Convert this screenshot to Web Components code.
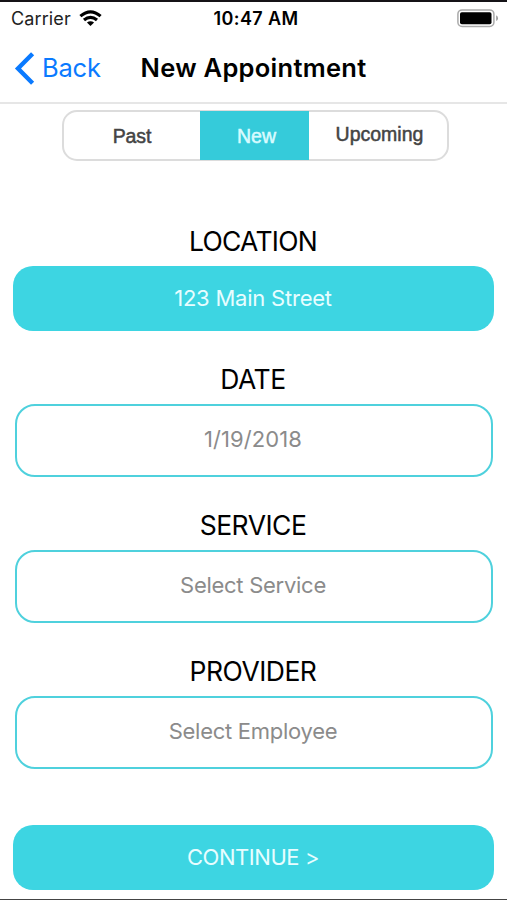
<!DOCTYPE html>
<html lang="en">
<head>
<meta charset="utf-8">
<title>New Appointment</title>
<style>
  body {
    margin: 0;
    background: #fff;
    font-family: Inter, "Liberation Sans", sans-serif;
  }
</style>
</head>
<body>
<phone-screen>
  <status-bar carrier="Carrier" time="10:47 AM"></status-bar>
  <nav-bar back="Back">New Appointment</nav-bar>
  <segment-control>
    <segment-item style="--w: 136px; --spacing: -0.1px">Past</segment-item>
    <segment-item selected style="--w: 109px; --nudge: 4px">New</segment-item>
    <segment-item style="--w: 138px; --nudge: 3px; --lift: 2px">Upcoming</segment-item>
  </segment-control>
  <form-field label="LOCATION" style="--label-spacing: -0.7px">
    <action-button>123 Main Street</action-button>
  </form-field>
  <form-field label="DATE">
    <select-box style="--spacing: 0.1px">1/19/2018</select-box>
  </form-field>
  <form-field label="SERVICE">
    <select-box>Select Service</select-box>
  </form-field>
  <form-field label="PROVIDER">
    <select-box>Select Employee</select-box>
  </form-field>
  <action-button style="margin-top: 56px; --spacing: -0.45px">CONTINUE &gt;</action-button>
</phone-screen>

<script>
class PhoneScreen extends HTMLElement {
  constructor() {
    super();
    this.attachShadow({ mode: "open" }).innerHTML = `
      <style>
        :host {
          display: flex;
          flex-direction: column;
          box-sizing: border-box;
          width: 507px;
          height: 900px;
          overflow: hidden;
          border-top: 2px solid #151317;
          border-bottom: 1px solid #444;
          background: #fff;
        }
      </style>
      <slot></slot>
    `;
  }
}

class StatusBar extends HTMLElement {
  constructor() {
    super();
    this.attachShadow({ mode: "open" });
  }

  connectedCallback() {
    this.shadowRoot.innerHTML = `
      <style>
        :host {
          display: grid;
          grid-template-columns: 1fr auto 1fr;
          align-items: center;
          height: 33px;
          padding: 0 8px 0 11px;
          font-size: 18px;
          line-height: 33px;
          color: #222;
        }
        .left { display: flex; align-items: center; gap: 8px; letter-spacing: .12px; }
        .time {
          padding-left: 2px;
          font-weight: 600;
          color: #000;
          letter-spacing: .4px;
        }
        .battery { justify-self: end; }
        svg { display: block; }
      </style>
      <div class="left">
        <span>${this.getAttribute("carrier")}</span>
        <svg width="23" height="17" viewBox="0 0 23 17" fill="none" stroke="#000" stroke-width="3.2">
          <path d="M1.4 6.1 Q11.5 -2.5 21.6 6.1"/>
          <path d="M5 10 Q11.5 4.6 18 10"/>
          <path d="M11.5 16 L7.9 12.5 Q11.5 9.8 15.1 12.5 Z" fill="#000" stroke="none"/>
        </svg>
      </div>
      <span class="time">${this.getAttribute("time")}</span>
      <svg class="battery" width="42" height="19" viewBox="0 0 42 19">
        <rect x=".9" y=".9" width="36" height="16.6" rx="4.2" fill="#fff" stroke="#aaa" stroke-width="1.5"/>
        <rect x="3" y="3.2" width="31.5" height="12" rx="1.8" fill="#000"/>
        <path d="M39.2 6.3 Q41 7.2 41 9.2 T39.2 12.1 Z" fill="#999"/>
      </svg>
    `;
  }
}

class NavBar extends HTMLElement {
  constructor() {
    super();
    this.attachShadow({ mode: "open" });
  }

  connectedCallback() {
    this.shadowRoot.innerHTML = `
      <style>
        :host {
          display: grid;
          grid-template-columns: 1fr auto 1fr;
          align-items: center;
          box-sizing: border-box;
          height: 69px;
          padding: 0 14px 1px;
          border-bottom: 2px solid #e6e6e6;
          font-size: 25.5px;
          line-height: 32px;
        }
        .back {
          display: flex;
          align-items: center;
          gap: 7px;
          letter-spacing: -.2px;
          color: #0a7aff;
        }
        .title { font-weight: 600; letter-spacing: .28px; color: #000; }
      </style>
      <div class="back">
        <svg width="21" height="33" viewBox="0 0 21 33" fill="none" stroke="#0a7aff" stroke-width="4.4">
          <path d="M18.6 1.8 L4 16.5 L18.6 31.2"/>
        </svg>
        <span>${this.getAttribute("back")}</span>
      </div>
      <span class="title"><slot></slot></span>
    `;
  }
}

class SegmentControl extends HTMLElement {
  constructor() {
    super();
    this.attachShadow({ mode: "open" }).innerHTML = `
      <style>
        :host {
          display: flex;
          align-self: flex-start;
          box-sizing: border-box;
          height: 51px;
          margin: 6px 0 0 62px;
          border: 2px solid #dcdcdc;
          border-radius: 15px;
        }
      </style>
      <slot></slot>
    `;
  }
}

class SegmentItem extends HTMLElement {
  constructor() {
    super();
    this.attachShadow({ mode: "open" }).innerHTML = `
      <style>
        :host {
          display: block;
          box-sizing: border-box;
          width: var(--w);
          padding: 1px 0 0 var(--nudge, 0);
          font: 19.5px/47px "Liberation Sans", Arial, sans-serif;
          letter-spacing: var(--spacing, 0);
          text-align: center;
          color: #444;
          -webkit-text-stroke: .5px currentColor;
        }
        :host([selected]) {
          margin: -1px 0;
          padding-top: 2px;
          background: #35cbda;
          color: #d9fbff;
        }
        span { display: block; margin-top: calc(var(--lift, 0px) * -1); }
      </style>
      <span><slot></slot></span>
    `;
  }
}

class FormField extends HTMLElement {
  constructor() {
    super();
    this.attachShadow({ mode: "open" });
  }

  connectedCallback() {
    this.shadowRoot.innerHTML = `
      <style>
        :host {
          display: flex;
          flex-direction: column;
          margin-top: 32px;
        }
        :host(:first-of-type) { margin-top: 64px; }
        label {
          height: 41px;
          padding-right: 1px;
          font-size: 26.5px;
          line-height: 32px;
          letter-spacing: var(--label-spacing, -0.5px);
          text-align: center;
          color: #000;
        }
      </style>
      <label>${this.getAttribute("label")}</label>
      <slot></slot>
    `;
  }
}

class SelectBox extends HTMLElement {
  constructor() {
    super();
    this.attachShadow({ mode: "open" }).innerHTML = `
      <style>
        :host {
          display: block;
          box-sizing: border-box;
          height: 73px;
          margin: 0 14px 0 15px;
          padding-right: 2px;
          border: 2px solid #4fd1dd;
          border-radius: 20px;
          font-size: 22px;
          line-height: 67px;
          letter-spacing: var(--spacing, -0.27px);
          text-align: center;
          color: #8b8b8b;
        }
      </style>
      <slot></slot>
    `;
  }
}

class ActionButton extends HTMLElement {
  constructor() {
    super();
    this.attachShadow({ mode: "open" }).innerHTML = `
      <style>
        :host {
          display: block;
          box-sizing: border-box;
          height: 65px;
          margin: 0 13px;
          padding-right: 1px;
          border-radius: 20px;
          background: #3dd5e2;
          font-size: 22px;
          line-height: 64px;
          letter-spacing: var(--spacing, -0.22px);
          text-align: center;
          color: #e8fdff;
        }
      </style>
      <slot></slot>
    `;
  }
}

customElements.define("phone-screen", PhoneScreen);
customElements.define("status-bar", StatusBar);
customElements.define("nav-bar", NavBar);
customElements.define("segment-control", SegmentControl);
customElements.define("segment-item", SegmentItem);
customElements.define("form-field", FormField);
customElements.define("select-box", SelectBox);
customElements.define("action-button", ActionButton);
</script>
</body>
</html>
